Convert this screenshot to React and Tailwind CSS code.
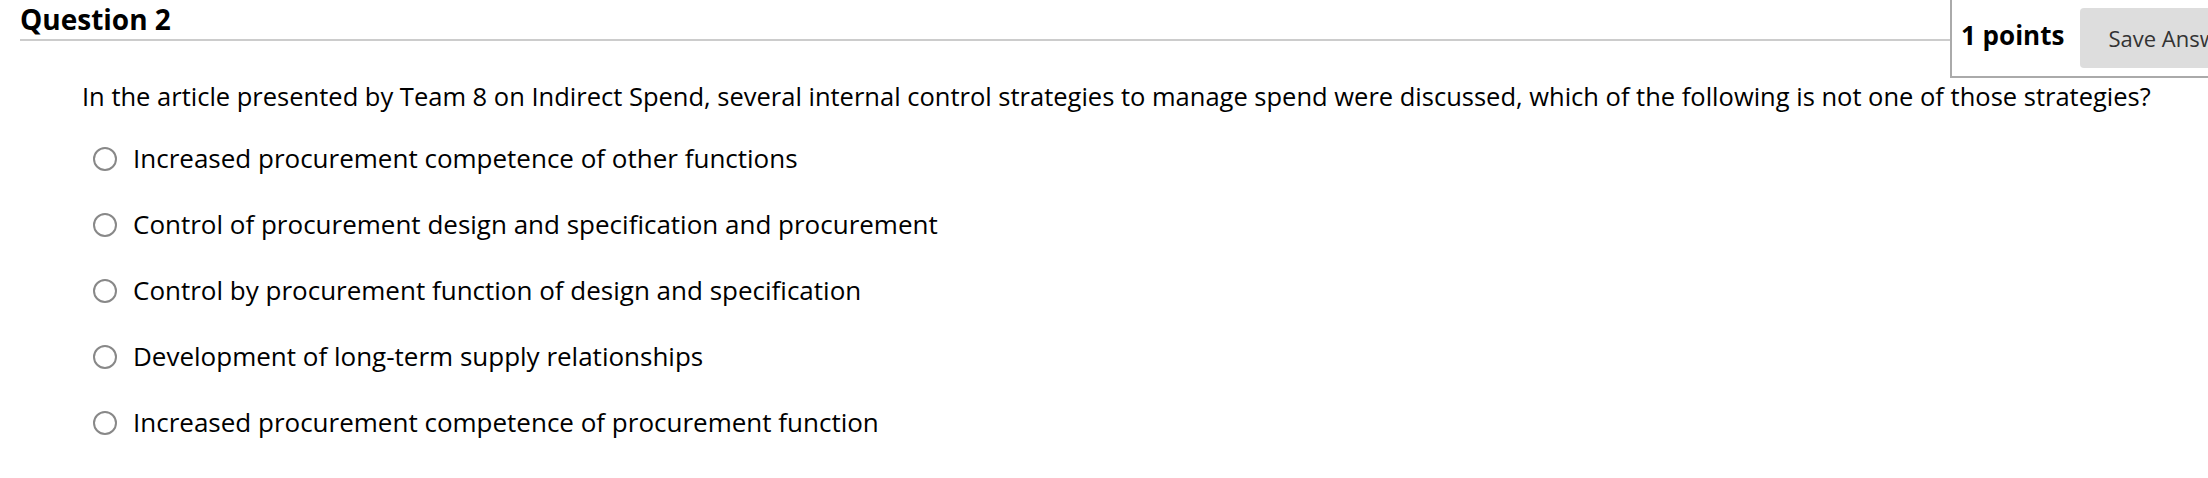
import React, { useState } from 'react';

const options = [
  'Increased procurement competence of other functions',
  'Control of procurement design and specification and procurement',
  'Control by procurement function of design and specification',
  'Development of long-term supply relationships',
  'Increased procurement competence of procurement function',
];

function App() {
  const [picked, setPicked] = useState(null);

  return (
    <div className="w-[2208px] h-[478px] overflow-hidden bg-white text-black font-['Open_Sans',sans-serif]">
      <div className="flex items-start">
        <div className="flex-1 pl-5">
          <h2 className="h-[41px] border-b-2 border-[#cccccc] pt-[1px] text-[28px] font-bold leading-[36px]">Question 2</h2>
        </div>
        <div className="flex h-[78px] w-[258px] shrink-0 items-start border-b-2 border-l-2 border-[#aaaaaa] pl-[9px]">
          <span className="mt-[17px] whitespace-nowrap text-[26px] font-bold leading-[36px]">1 points</span>
          <button className="ml-[16px] mt-[8px] h-[60px] w-[180px] shrink-0 whitespace-nowrap rounded-[4px] bg-[#dddddd] pl-[28px] text-left text-[22px] text-[#333333]">Save Answer</button>
        </div>
      </div>

      <p className="ml-[82px] mt-[1px] whitespace-nowrap text-[25.5px] leading-[34px]">
        In the article presented by Team 8 on Indirect Spend, several internal control strategies to manage spend were discussed, which of the following is not one of those strategies?
      </p>

      <div className="ml-[93px] mt-[29px] flex flex-col gap-[33px]">
        {options.map((o, i) => (
          <label key={i} className="flex cursor-pointer items-center gap-[16px] text-[26px] leading-[33px]">
            <span
              onClick={() => setPicked(i)}
              className="flex h-[24px] w-[24px] items-center justify-center rounded-full border-2 border-[#888888] bg-white"
            >
              {picked === i && <span className="h-[12px] w-[12px] rounded-full bg-[#333]" />}
            </span>
            <span>{o}</span>
          </label>
        ))}
      </div>
    </div>
  );
}

export default App;
